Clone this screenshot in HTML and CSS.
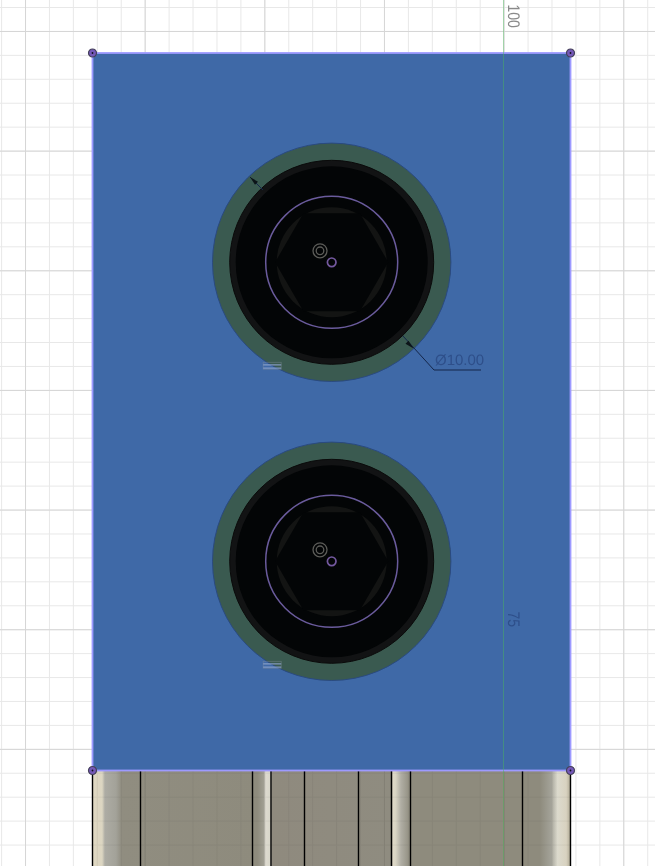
FILE: index.html
```html
<!DOCTYPE html>
<html lang="en">
<head>
    <meta charset="UTF-8">
    <title>Sketch plate</title>
    <link rel="stylesheet" href="styles.css">
</head>
<body>
    <div class="viewport">
        <svg class="canvas" width="655" height="866" viewBox="0 0 655 866">
            <defs>
                <pattern id="gridMinor" patternUnits="userSpaceOnUse" x="1.1" y="7" width="23.93" height="23.93">
                    <path class="grid-minor" d="M0.5 0V23.93M0 0.5H23.93"/>
                </pattern>
                <pattern id="gridMajor" patternUnits="userSpaceOnUse" x="25" y="31" width="119.65" height="119.65">
                    <path class="grid-major" d="M0.5 0V119.65M0 0.5H119.65"/>
                </pattern>
                <linearGradient id="bodyShade" gradientUnits="userSpaceOnUse" x1="92" y1="0" x2="571" y2="0">
                    <stop offset="0" stop-color="#e0d8c2"/>
                    <stop offset="0.021" stop-color="#dcd6c2"/>
                    <stop offset="0.027" stop-color="#adaca4"/>
                    <stop offset="0.05" stop-color="#a3a299"/>
                    <stop offset="0.062" stop-color="#908d80"/>
                    <stop offset="0.345" stop-color="#8e8b7d"/>
                    <stop offset="0.358" stop-color="#a09e92"/>
                    <stop offset="0.362" stop-color="#dedbd0"/>
                    <stop offset="0.372" stop-color="#d8d6ca"/>
                    <stop offset="0.376" stop-color="#8f8a7e"/>
                    <stop offset="0.625" stop-color="#8f8c80"/>
                    <stop offset="0.628" stop-color="#e0dac8"/>
                    <stop offset="0.634" stop-color="#d8d4c4"/>
                    <stop offset="0.645" stop-color="#b0aea4"/>
                    <stop offset="0.665" stop-color="#8e8b7d"/>
                    <stop offset="0.935" stop-color="#8e8b7d"/>
                    <stop offset="0.958" stop-color="#a3a298"/>
                    <stop offset="0.972" stop-color="#dcdacd"/>
                    <stop offset="0.99" stop-color="#d8d2c0"/>
                    <stop offset="1" stop-color="#aaa48e"/>
                </linearGradient>
                <g id="hole">
                    <circle class="hole-wall" r="119.2"/>
                    <circle class="hole-rim" r="102"/>
                    <circle class="hole-floor" r="96"/>
                    <circle class="hex-chamfer" r="55"/>
                    <polygon class="hex-flat" points="-56.6,0 -28.3,-49 28.3,-49 56.6,0 28.3,49 -28.3,49"/>
                    <circle class="sketch-circle" r="66"/>
                    <circle class="drill-mark" cx="-11.7" cy="-11.5" r="7"/>
                    <circle class="drill-mark" cx="-11.7" cy="-11.5" r="3.8"/>
                    <circle class="center-point" r="4.3"/>
                    <rect class="equal-box" x="-68.5" y="100" width="18" height="7"/>
                    <path class="equal-mark" d="M-68.5 102.5H-50.5M-68.5 105.8H-50.5"/>
                </g>
                <g id="corner">
                    <circle class="corner-point" r="4"/>
                    <circle class="corner-dot" r="0.9"/>
                </g>
            </defs>

            <rect class="paper" width="655" height="866"/>
            <rect width="655" height="866" fill="url(#gridMinor)"/>
            <rect width="655" height="866" fill="url(#gridMajor)"/>

            <!-- body seen past the sketch plane -->
            <rect class="body-strip" x="92" y="771" width="479" height="95" fill="url(#bodyShade)"/>
            <g class="body-grid">
                <rect x="92" y="771" width="479" height="95" fill="url(#gridMinor)"/>
                <rect x="92" y="771" width="479" height="95" fill="url(#gridMajor)"/>
            </g>
            <path class="body-edges" d="M92.5 771V866M140.5 771V866M252.5 771V866M271 771V866M304.5 771V866M358.5 771V866M391.5 771V866M410.5 771V866M522.5 771V866M570.5 771V866"/>

            <rect class="plate" x="92.5" y="53" width="478" height="717.5"/>

            <use href="#hole" x="331.7" y="262.3"/>
            <use href="#hole" x="331.7" y="561.3"/>

            <path class="axis" d="M503.5 0V866"/>

            <!-- dimensions -->
            <path class="dim-line" d="M250 177L263 190"/>
            <polygon class="dim-arrow" points="250,177 258,181.8 255,184.8"/>
            <path class="dim-line" d="M403 336L434 370H481"/>
            <polygon class="dim-arrow" points="413.5,348.5 405.5,343.7 408.5,340.7"/>
            <text class="dim-text" x="435" y="364.5">Ø10.00</text>
            <text class="grid-label" transform="translate(508 4.5) rotate(90) scale(1 1.2)">100</text>
            <text class="plate-label" transform="translate(508 611.5) rotate(90) scale(1 1.2)">75</text>

            <use href="#corner" x="92.5" y="53"/>
            <use href="#corner" x="570.5" y="53"/>
            <use href="#corner" x="92.5" y="770.5"/>
            <use href="#corner" x="570.5" y="770.5"/>
        </svg>
    </div>
</body>
</html>
```

FILE: styles.css
```css
* {
    margin: 0;
    padding: 0;
    box-sizing: border-box;
}

body {
    background: #ffffff;
    font-family: 'Liberation Sans', Arial, sans-serif;
    overflow: hidden;
}

.viewport {
    width: 655px;
    height: 866px;
}

.canvas {
    display: block;
}

.paper {
    fill: #ffffff;
}

.grid-minor {
    fill: none;
    stroke: #e8e8e8;
    stroke-width: 1;
}

.grid-major {
    fill: none;
    stroke: #d6d6d6;
    stroke-width: 1;
}

.body-grid {
    opacity: 0.55;
    mix-blend-mode: multiply;
}

.body-edges {
    fill: none;
    stroke: #000000;
    stroke-width: 1.4;
}

.plate {
    fill: #3f69a7;
    stroke: #9d9aff;
    stroke-width: 1.8;
}

.hole-wall {
    fill: #3a5a50;
    stroke: #2a4a80;
    stroke-width: 1;
}

.hole-rim {
    fill: #121314;
    stroke: #0a0a0a;
    stroke-width: 1;
}

.hole-floor {
    fill: #030506;
}

.hex-chamfer {
    fill: #131413;
}

.hex-flat {
    fill: #030506;
}

.sketch-circle {
    fill: none;
    stroke: #6a5b9c;
    stroke-width: 1.5;
}

.drill-mark {
    fill: none;
    stroke: #5c5c58;
    stroke-width: 1.3;
}

.center-point {
    fill: none;
    stroke: #74599f;
    stroke-width: 1.7;
}

.equal-box {
    fill: none;
    stroke: #7f8d9a;
    stroke-width: 0.8;
    opacity: 0.5;
}

.equal-mark {
    fill: none;
    stroke: #8fa5cc;
    stroke-width: 1.3;
    opacity: 0.85;
}

.axis {
    fill: none;
    stroke: #4cb85c;
    stroke-width: 1;
    opacity: 0.45;
}

.dim-line {
    fill: none;
    stroke: #14264a;
    stroke-width: 1;
}

.dim-arrow {
    fill: #0c1418;
}

.dim-text {
    fill: #2e4f8a;
    font-size: 15px;
    text-rendering: geometricPrecision;
}

.grid-label {
    fill: #8a8a8a;
    font-size: 14px;
    text-rendering: geometricPrecision;
}

.plate-label {
    fill: #2e4f8a;
    font-size: 14px;
    text-rendering: geometricPrecision;
}

.corner-point {
    fill: #7458b8;
    stroke: #45415a;
    stroke-width: 1.2;
}

.corner-dot {
    fill: #10101c;
}
```
